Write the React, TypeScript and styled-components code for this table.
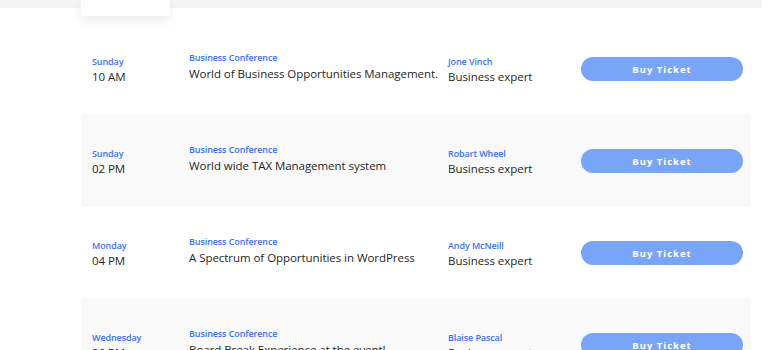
import React from "react";
import styled, { createGlobalStyle } from "styled-components";

const Global = createGlobalStyle`
  html, body { margin: 0; padding: 0; background: #ffffff; }
  body { font-family: "Open Sans", "Liberation Sans", sans-serif; width: 768px; height: 350px; overflow: hidden; }
  * { box-sizing: border-box; }
`;

const Page = styled.div`
  width: 768px;
`;

const TopBand = styled.div`
  height: 8px;
  background: #f4f4f4;
  padding-left: 81px;
  margin-right: 6px;
`;

const Card = styled.div`
  width: 89px;
  height: 16px;
  background: #ffffff;
  box-shadow: 0 4px 10px rgba(0, 0, 0, 0.08);
  position: relative;
  z-index: 1;
`;

const List = styled.div`
  margin: 15px 0 0 81px;
  width: 670px;
  display: flex;
  flex-direction: column;
`;

const Row = styled.div<{ $shaded: boolean }>`
  height: 92px;
  display: grid;
  grid-template-columns: 97px 259px 133px 162px;
  align-items: center;
  padding: 2px 8px 0 11px;
  background: ${(p) => (p.$shaded ? "#f9f9f9" : "#ffffff")};
`;

const Cell = styled.div<{ $lift?: number }>`
  display: flex;
  flex-direction: column;
  margin-bottom: ${(p) => p.$lift ?? 0}px;
`;

const Label = styled.span`
  font-size: 9px;
  font-weight: 600;
  color: #3c70f6;
  line-height: 12px;
  letter-spacing: -0.1px;
  white-space: nowrap;
`;

const Main = styled.span<{ $gap: number }>`
  font-size: 11.5px;
  font-weight: 500;
  color: #262626;
  line-height: 15px;
  letter-spacing: -0.05px;
  margin-top: ${(p) => p.$gap}px;
  white-space: nowrap;
`;

const Button = styled.button`
  height: 24px;
  width: 162px;
  margin-bottom: 2px;
  border: none;
  border-radius: 12px;
  background: #79a5f8;
  color: #ffffff;
  font-family: "Open Sans", "Liberation Sans", sans-serif;
  font-size: 9.5px;
  font-weight: 700;
  letter-spacing: 1px;
  padding: 0;
  cursor: pointer;
`;

const events = [
  { day: "Sunday", time: "10 AM", title: "World of Business Opportunities Management.", speaker: "Jone Vinch" },
  { day: "Sunday", time: "02 PM", title: "World wide TAX Management system", speaker: "Robart Wheel" },
  { day: "Monday", time: "04 PM", title: "A Spectrum of Opportunities in WordPress", speaker: "Andy McNeill" },
  { day: "Wednesday", time: "06 PM", title: "Board Break Experience at the event!", speaker: "Blaise Pascal" },
];

export default function App() {
  return (
    <Page>
      <Global />
      <TopBand>
        <Card />
      </TopBand>
      <List>
        {events.map((e, i) => (
          <Row key={i} $shaded={i % 2 === 1}>
            <Cell>
              <Label>{e.day}</Label>
              <Main $gap={1}>{e.time}</Main>
            </Cell>
            <Cell $lift={8}>
              <Label>Business Conference</Label>
              <Main $gap={2}>{e.title}</Main>
            </Cell>
            <Cell>
              <Label>{e.speaker}</Label>
              <Main $gap={1}>Business expert</Main>
            </Cell>
            <Button>Buy Ticket</Button>
          </Row>
        ))}
      </List>
    </Page>
  );
}
